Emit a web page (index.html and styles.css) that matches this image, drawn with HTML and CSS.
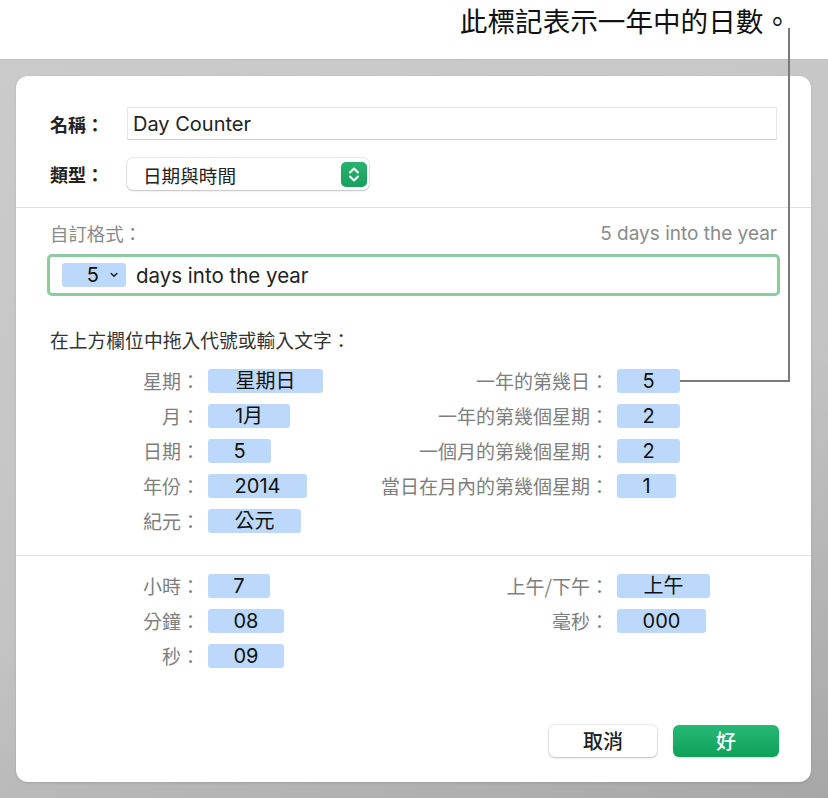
FILE: index.html
```html
<!DOCTYPE html>
<html lang="zh-Hant">
<head>
<meta charset="utf-8">
<title>Day Counter</title>
<link rel="stylesheet" href="styles.css">
</head>
<body>
<div class="page">
  <header class="callout-bar">
    <p class="callout">此標記表示一年中的日數。</p>
  </header>
  <div class="backdrop">
    <section class="dialog">
      <div class="form-top">
        <div class="row">
          <span class="row-label">名稱：</span>
          <div class="text-input">Day Counter</div>
        </div>
        <div class="row">
          <span class="row-label">類型：</span>
          <div class="popup">
            <span class="popup-text">日期與時間</span>
            <span class="stepper">
              <svg width="26" height="25" viewBox="0 0 26 25"><path d="M9 10.5 L13 6.5 L17 10.5 M9 14.5 L13 18.5 L17 14.5" fill="none" stroke="#fff" stroke-width="2" stroke-linecap="round" stroke-linejoin="round"/></svg>
            </span>
          </div>
        </div>
      </div>

      <hr class="divider">

      <div class="format">
        <div class="format-head">
          <span class="muted">自訂格式：</span>
          <span class="preview">5 days into the year</span>
        </div>
        <div class="format-field">
          <span class="field-token"><span>5</span><svg width="8" height="6" viewBox="0 0 8 6"><path d="M1.2 1.5 L4 4.3 L6.8 1.5" fill="none" stroke="#222" stroke-width="1.6" stroke-linecap="round" stroke-linejoin="round"/></svg></span>
          <span class="field-text">days into the year</span>
        </div>
        <p class="hint">在上方欄位中拖入代號或輸入文字：</p>

        <div class="token-grid">
          <span class="t-label">星期：</span><span class="token w115">星期日</span>
          <span class="t-label">一年的第幾日：</span><span class="token w63">5</span>

          <span class="t-label">月：</span><span class="token w82">1月</span>
          <span class="t-label">一年的第幾個星期：</span><span class="token w63">2</span>

          <span class="t-label">日期：</span><span class="token w63">5</span>
          <span class="t-label">一個月的第幾個星期：</span><span class="token w63">2</span>

          <span class="t-label">年份：</span><span class="token w99">2014</span>
          <span class="t-label">當日在月內的第幾個星期：</span><span class="token w59">1</span>

          <span class="t-label">紀元：</span><span class="token w93">公元</span>
        </div>
      </div>

      <hr class="divider divider-low">

      <div class="token-grid time-grid">
        <span class="t-label">小時：</span><span class="token w62">7</span>
        <span class="t-label">上午/下午：</span><span class="token w93">上午</span>

        <span class="t-label">分鐘：</span><span class="token w76">08</span>
        <span class="t-label">毫秒：</span><span class="token w89">000</span>

        <span class="t-label">秒：</span><span class="token w76">09</span>
      </div>

      <div class="buttons">
        <button class="btn btn-cancel" type="button">取消</button>
        <button class="btn btn-ok" type="button">好</button>
      </div>
    </section>
  </div>

  <svg class="leader" width="828" height="798" viewBox="0 0 828 798">
    <polyline points="789,28 789,381 680,381" fill="none" stroke="#7a7a7a" stroke-width="2"/>
  </svg>
</div>
</body>
</html>
```

FILE: styles.css
```css
* { box-sizing: border-box; }

html, body {
  margin: 0;
  padding: 0;
  background: #ffffff;
}

body {
  font-family: "Inter", "Noto Sans CJK TC", sans-serif;
  color: #222;
}

.page {
  position: relative;
  width: 828px;
  height: 798px;
  overflow: hidden;
}

.callout-bar {
  height: 60px;
  background: #fff;
}

.callout {
  margin: 0;
  padding: 2px 37px 0 0;
  text-align: right;
  font-family: "Noto Sans CJK TC", sans-serif;
  font-size: 27.6px;
  line-height: 36px;
  color: #111;
}

.backdrop {
  padding: 16px 17px 16px 16px;
  background: linear-gradient(160deg, #cbcbcb 0%, #c4c4c4 55%, #a7a7a7 100%);
  border-top: 1px solid #bdbdbd;
  margin-top: -1px;
}

.dialog {
  background: #fff;
  border-radius: 12px;
  height: 706px;
  padding: 31px 0 25px;
  display: flex;
  flex-direction: column;
  box-shadow: 0 1px 3px rgba(0,0,0,0.12);
}

.form-top {
  padding: 0 34px;
  display: flex;
  flex-direction: column;
  gap: 18px;
}

.row {
  display: flex;
  align-items: center;
}

.row-label {
  width: 77px;
  font-family: "Noto Sans CJK TC", sans-serif;
  font-weight: 700;
  font-size: 18px;
  color: #222;
}

.text-input {
  flex: 1;
  height: 33px;
  border: 1px solid #e6e6e6;
  border-bottom-color: #cfcfcf;
  padding: 0 5px;
  font-size: 20px;
  line-height: 33px;
  color: #222;
}

.popup {
  width: 242px;
  height: 32px;
  border-radius: 6px;
  background: #fff;
  box-shadow: 0 0 0 1px rgba(0,0,0,0.08), 0 1px 2px rgba(0,0,0,0.18);
  display: flex;
  align-items: center;
  justify-content: space-between;
  padding: 0 2px 0 16px;
}

.popup-text {
  font-family: "Noto Sans CJK TC", sans-serif;
  font-size: 18.6px;
  color: #222;
}

.stepper {
  width: 26px;
  height: 25px;
  border-radius: 5px;
  background: linear-gradient(#27b36d, #17a05e);
  display: flex;
}

.divider {
  margin: 17px 0 0;
  border: 0;
  border-top: 1px solid #e2e2e2;
  height: 0;
}

.divider-low {
  margin-top: 22px;
}

.format {
  padding: 13px 34px 0;
}

.format-head {
  display: flex;
  justify-content: space-between;
  align-items: center;
  height: 24px;
}

.muted {
  font-family: "Noto Sans CJK TC", sans-serif;
  font-size: 18.4px;
  color: #8a8a8a;
}

.preview {
  font-size: 19px;
  color: #8a8a8a;
}

.format-field {
  margin: 9px -3px 0;
  height: 42px;
  border: 3px solid #8ccc9f;
  border-radius: 5px;
  display: flex;
  align-items: center;
  padding-left: 12px;
}

.field-token {
  width: 64px;
  height: 24px;
  border-radius: 3px;
  background: #bcd9fc;
  display: flex;
  align-items: center;
  justify-content: flex-end;
  gap: 11px;
  padding-right: 8px;
  font-size: 20px;
  color: #111;
}

.field-token svg { display: block; }

.field-text {
  margin-left: 10px;
  font-size: 20.5px;
  color: #222;
}

.hint {
  margin: 32px 0 0;
  font-family: "Noto Sans CJK TC", sans-serif;
  font-size: 18.8px;
  line-height: 24px;
  color: #333;
}

.token-grid {
  margin-top: 17px;
  display: grid;
  grid-template-columns: 158px 152px 257px 1fr;
  grid-auto-rows: 24px;
  row-gap: 11px;
}

.time-grid {
  margin-top: 18px;
  padding: 0 34px;
}

.t-label {
  text-align: right;
  padding-right: 8px;
  font-family: "Noto Sans CJK TC", sans-serif;
  font-size: 19px;
  line-height: 24px;
  color: #7e7e7e;
  white-space: nowrap;
}

.token {
  justify-self: start;
  height: 24px;
  border-radius: 3px;
  background: #bcd9fc;
  text-align: center;
  font-size: 20px;
  line-height: 24px;
  color: #111;
}

.w59 { width: 59px; }
.w62 { width: 62px; }
.w63 { width: 63px; }
.w76 { width: 76px; }
.w82 { width: 82px; }
.w89 { width: 89px; }
.w93 { width: 93px; }
.w99 { width: 99px; }
.w115 { width: 115px; }

.buttons {
  margin-top: auto;
  padding: 0 32px 0 0;
  display: flex;
  justify-content: flex-end;
  gap: 16px;
}

.btn {
  height: 32px;
  border: 0;
  border-radius: 6px;
  font-family: "Noto Sans CJK TC", sans-serif;
  font-size: 20px;
  font-weight: 500;
  padding: 0;
  line-height: 32px;
}

.btn-cancel {
  width: 108px;
  background: #fff;
  color: #222;
  box-shadow: 0 0 0 1px rgba(0,0,0,0.07), 0 1px 2px rgba(0,0,0,0.2);
}

.btn-ok {
  width: 106px;
  background: linear-gradient(#27b877, #0ea15a);
  color: #fff;
  box-shadow: 0 1px 2px rgba(0,0,0,0.15);
}

.leader {
  position: absolute;
  left: 0;
  top: 0;
  pointer-events: none;
}
```
